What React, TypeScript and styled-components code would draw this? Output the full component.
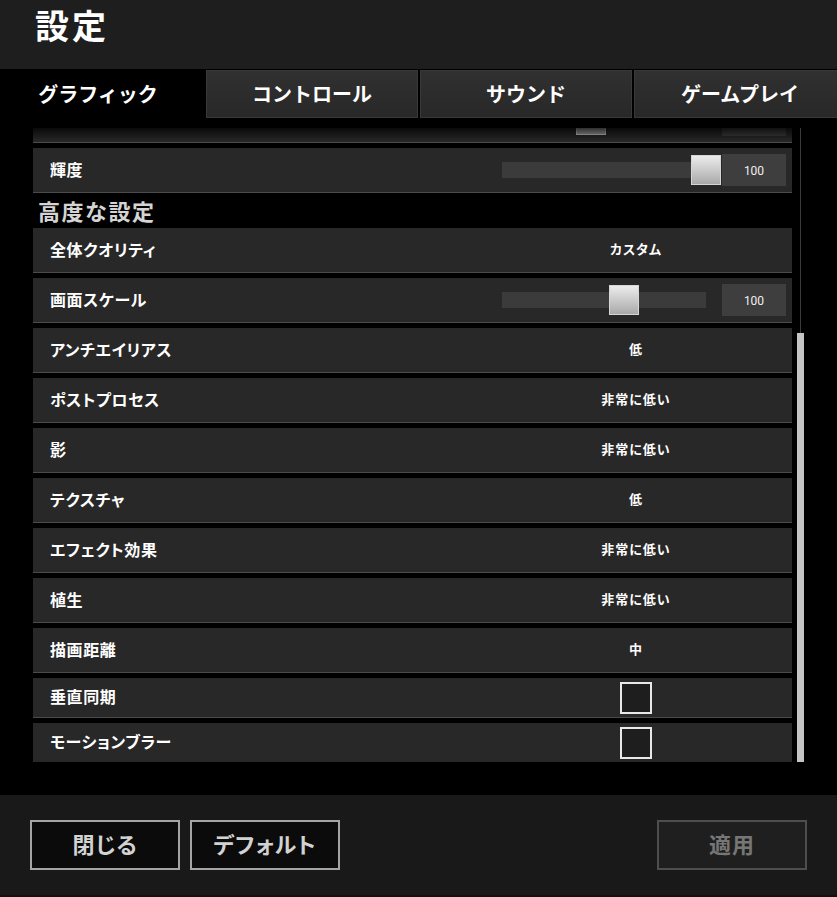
import React, { useLayoutEffect, useRef } from "react";
import styled, { createGlobalStyle } from "styled-components";

const GlobalStyle = createGlobalStyle`
  html, body { margin: 0; padding: 0; background: #000; }
  body { font-family: "Noto Sans CJK JP", "Noto Sans", sans-serif; }
  * { box-sizing: border-box; }
`;

const Page = styled.div`
  width: 837px;
  height: 897px;
  background: #000;
  display: flex;
  flex-direction: column;
  overflow: hidden;
  color: #fff;
`;

const Header = styled.header`
  height: 69px;
  flex: none;
  background: #1e1e1e;
  padding: 8px 0 0 35px;
`;

const Title = styled.h1`
  margin: 0;
  font-size: 34px;
  line-height: 1;
  font-weight: 700;
  letter-spacing: 3px;
  color: #fff;
`;

const TabBar = styled.nav`
  height: 49px;
  flex: none;
  display: flex;
  align-items: flex-start;
  gap: 2px;
  padding-top: 1px;
  background: #000;
`;

const Tab = styled.div<{ $active?: boolean; $w: number }>`
  flex: none;
  width: ${(p) => p.$w}px;
  height: 48px;
  display: flex;
  align-items: center;
  justify-content: center;
  font-size: 20px;
  font-weight: 700;
  color: #fff;
  padding-bottom: 2px;
  padding-right: ${(p) => (p.$active ? "8px" : "0")};
  background: ${(p) =>
    p.$active ? "#000" : "linear-gradient(180deg, #303030 0%, #282828 100%)"};
  border: ${(p) => (p.$active ? "none" : "1px solid #393939")};
`;

const Main = styled.main`
  flex: 1;
  display: flex;
  gap: 4px;
  padding: 10px 0 33px 33px;
  min-height: 0;
`;

const ViewportWrap = styled.div`
  position: relative;
  width: 759px;
  flex: none;
  height: 634px;
`;

const Viewport = styled.div`
  width: 100%;
  height: 100%;
  overflow: hidden;
`;

const TopShade = styled.div`
  position: absolute;
  left: 0;
  right: 0;
  top: 0;
  height: 14px;
  background: linear-gradient(180deg, rgba(0, 0, 0, 0.75), rgba(0, 0, 0, 0));
  pointer-events: none;
`;

const List = styled.div`
  display: flex;
  flex-direction: column;
  gap: 5px;
`;

const Row = styled.div<{ $h: number }>`
  height: ${(p) => p.$h}px;
  flex: none;
  display: grid;
  grid-template-columns: 1fr 312px;
  background: #282828;
  border-bottom: 1px solid #4b4b4b;
`;

const Label = styled.div`
  display: flex;
  align-items: center;
  padding: 0 0 3px 17px;
  font-size: 16px;
  font-weight: 700;
  letter-spacing: 0.6px;
  font-feature-settings: "palt";
  color: #fff;
`;

const ValueCell = styled.div<{ $slider?: boolean }>`
  display: flex;
  align-items: center;
  justify-content: ${(p) => (p.$slider ? "flex-end" : "center")};
  gap: 16px;
  padding-right: ${(p) => (p.$slider ? "6px" : "0")};
  padding-bottom: ${(p) => (p.$slider ? "0" : "3px")};
`;

const ValueText = styled.span`
  font-size: 13px;
  font-weight: 700;
  letter-spacing: 1px;
  font-feature-settings: "palt";
  color: #fff;
`;

const Track = styled.div`
  position: relative;
  width: 204px;
  height: 16px;
  background: #3b3b3b;
`;

const Thumb = styled.div`
  position: absolute;
  top: 50%;
  width: 30px;
  height: 30px;
  transform: translate(-50%, -50%);
  background: linear-gradient(180deg, #ececec 0%, #a9a9a9 100%);
  border: 1px solid #d6d6d6;
`;

const NumBox = styled.div`
  width: 64px;
  height: 32px;
  background: #3e3e3e;
  display: flex;
  align-items: center;
  justify-content: center;
  padding-top: 2px;
  font-family: Roboto, "Liberation Sans", sans-serif;
  font-size: 12px;
  color: #f0f0f0;
`;

const CheckBox = styled.div`
  width: 32px;
  height: 32px;
  border: 2px solid #e8e8e8;
  background: #1e1e1e;
`;

const Heading = styled.h2`
  margin: 0;
  height: 25px;
  flex: none;
  padding-left: 5px;
  font-size: 22px;
  line-height: 25px;
  font-weight: 700;
  letter-spacing: 1.5px;
  color: #d4d4d4;
`;

const ScrollTrack = styled.div`
  position: relative;
  width: 9px;
  height: 634px;
  flex: none;
  background: linear-gradient(90deg, transparent 4px, #3a3a3a 4px, #3a3a3a 5px, transparent 5px);
`;

const ScrollThumb = styled.div`
  position: absolute;
  left: 1px;
  width: 7px;
  background: #c4c4c4;
`;

const Footer = styled.footer`
  height: 102px;
  flex: none;
  background: #191919;
  display: flex;
  align-items: flex-start;
  gap: 10px;
  padding: 25px 30px 0 30px;
  border-bottom: 2px solid #111;
`;

const Button = styled.button<{ $disabled?: boolean }>`
  width: 150px;
  height: 50px;
  flex: none;
  margin-left: ${(p) => (p.$disabled ? "auto" : "0")};
  background: ${(p) => (p.$disabled ? "#1f1f1f" : "#0b0b0b")};
  border: 2px solid ${(p) => (p.$disabled ? "#4e4e4e" : "#a4a4a4")};
  color: ${(p) => (p.$disabled ? "#767676" : "#d2d2d2")};
  font-family: "Noto Sans CJK JP", sans-serif;
  font-size: 22px;
  font-weight: 700;
  letter-spacing: 1px;
  font-feature-settings: "palt";
  padding: 0 0 4px 0;
  cursor: pointer;
`;

type Item =
  | { kind: "value"; label: string; value: string }
  | { kind: "slider"; label: string; t: number; value: string }
  | { kind: "check"; label: string }
  | { kind: "heading"; label: string };

const items: Item[] = [
  { kind: "value", label: "画面モード", value: "フルスクリーン" },
  { kind: "value", label: "解像度", value: "1920x1080" },
  { kind: "slider", label: "ガンマ", t: 0.436, value: "50" },
  { kind: "slider", label: "輝度", t: 1, value: "100" },
  { kind: "heading", label: "高度な設定" },
  { kind: "value", label: "全体クオリティ", value: "カスタム" },
  { kind: "slider", label: "画面スケール", t: 0.598, value: "100" },
  { kind: "value", label: "アンチエイリアス", value: "低" },
  { kind: "value", label: "ポストプロセス", value: "非常に低い" },
  { kind: "value", label: "影", value: "非常に低い" },
  { kind: "value", label: "テクスチャ", value: "低" },
  { kind: "value", label: "エフェクト効果", value: "非常に低い" },
  { kind: "value", label: "植生", value: "非常に低い" },
  { kind: "value", label: "描画距離", value: "中" },
  { kind: "check", label: "垂直同期" },
  { kind: "check", label: "モーションブラー" },
];

const tabs = [
  { label: "グラフィック", w: 204, active: true },
  { label: "コントロール", w: 212 },
  { label: "サウンド", w: 212 },
  { label: "ゲームプレイ", w: 212 },
];

function SettingRow({ item }: { item: Item }) {
  if (item.kind === "heading") return <Heading>{item.label}</Heading>;
  if (item.kind === "check") {
    return (
      <Row $h={40}>
        <Label>{item.label}</Label>
        <ValueCell $slider={false} style={{ paddingBottom: 0 }}>
          <CheckBox />
        </ValueCell>
      </Row>
    );
  }
  if (item.kind === "slider") {
    return (
      <Row $h={45}>
        <Label>{item.label}</Label>
        <ValueCell $slider>
          <Track>
            <Thumb style={{ left: `${item.t * 100}%` }} />
          </Track>
          <NumBox>{item.value}</NumBox>
        </ValueCell>
      </Row>
    );
  }
  return (
    <Row $h={45}>
      <Label>{item.label}</Label>
      <ValueCell>
        <ValueText>{item.value}</ValueText>
      </ValueCell>
    </Row>
  );
}

export default function App() {
  const vp = useRef<HTMLDivElement>(null);
  useLayoutEffect(() => {
    if (vp.current) vp.current.scrollTop = 130;
  }, []);
  return (
    <>
      <GlobalStyle />
      <Page>
        <Header>
          <Title>設定</Title>
        </Header>
        <TabBar>
          {tabs.map((t) => (
            <Tab key={t.label} $w={t.w} $active={t.active}>
              {t.label}
            </Tab>
          ))}
        </TabBar>
        <Main>
          <ViewportWrap>
            <Viewport ref={vp}>
              <List>
                {items.map((it) => (
                  <SettingRow key={it.label} item={it} />
                ))}
              </List>
            </Viewport>
            <TopShade />
          </ViewportWrap>
          <ScrollTrack>
            <ScrollThumb style={{ top: 205, height: 429 }} />
          </ScrollTrack>
        </Main>
        <Footer>
          <Button>閉じる</Button>
          <Button>デフォルト</Button>
          <Button $disabled>適用</Button>
        </Footer>
      </Page>
    </>
  );
}
